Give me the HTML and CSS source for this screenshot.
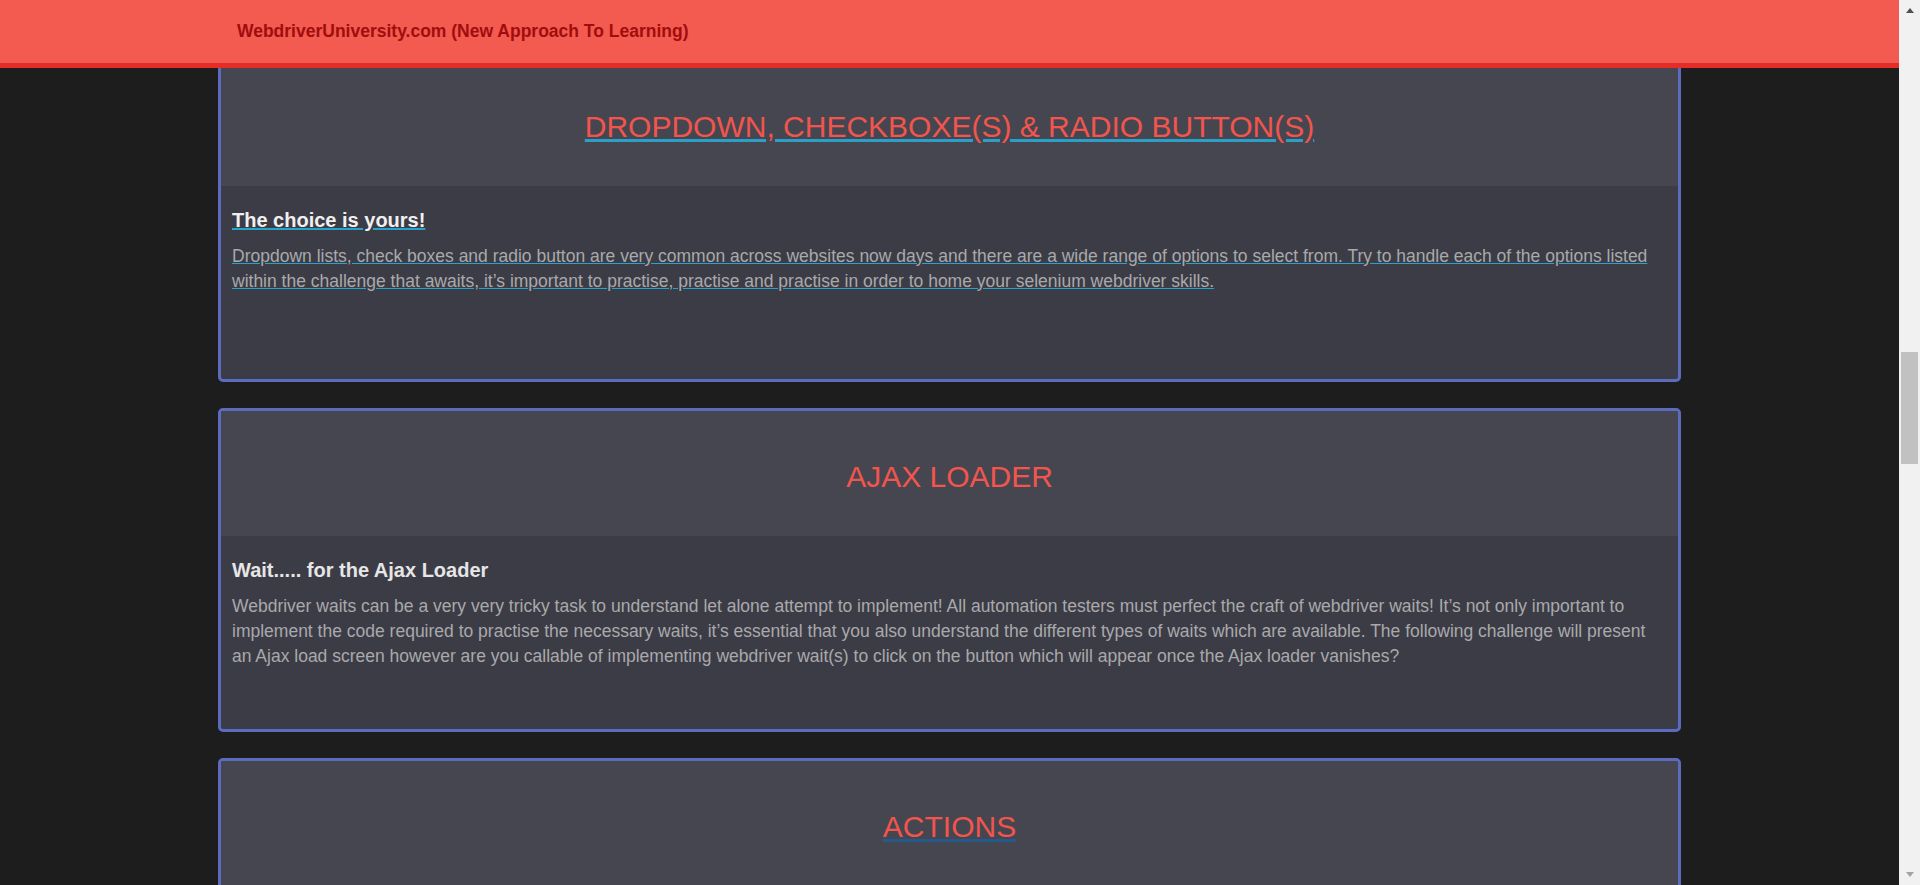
FILE: index.html
```html
<!DOCTYPE html>
<html lang="en">
<head>
<meta charset="utf-8">
<title>WebdriverUniversity.com</title>
<link rel="stylesheet" href="styles.css">
</head>
<body>
<div class="window">
  <div class="page">
    <header class="navbar">
      <span class="brand">WebdriverUniversity.com (New Approach To Learning)</span>
    </header>
    <div class="viewport">
      <div class="content">
        <section class="card">
          <div class="card-head">
            <h2 class="card-title hovered">DROPDOWN, CHECKBOXE(S) &amp; RADIO BUTTON(S)</h2>
          </div>
          <div class="card-body hovered-body">
            <h4 class="card-subtitle">The choice is yours!</h4>
            <p class="card-text">Dropdown lists, check boxes and radio button are very common across websites now days and there are a wide range of options to select from. Try to handle each of the options listed within the challenge that awaits, it’s important to practise, practise and practise in order to home your selenium webdriver skills.</p>
          </div>
        </section>
        <section class="card">
          <div class="card-head">
            <h2 class="card-title">AJAX LOADER</h2>
          </div>
          <div class="card-body">
            <h4 class="card-subtitle">Wait..... for the Ajax Loader</h4>
            <p class="card-text">Webdriver waits can be a very very tricky task to understand let alone attempt to implement! All automation testers must perfect the craft of webdriver waits! It’s not only important to implement the code required to practise the necessary waits, it’s essential that you also understand the different types of waits which are available. The following challenge will present an Ajax load screen however are you callable of implementing webdriver wait(s) to click on the button which will appear once the Ajax loader vanishes?</p>
          </div>
        </section>
        <section class="card">
          <div class="card-head">
            <h2 class="card-title visited">ACTIONS</h2>
          </div>
          <div class="card-body"></div>
        </section>
      </div>
    </div>
  </div>
  <div class="scrollbar">
    <div class="sb-btn"><span class="arrow-up"></span></div>
    <div class="sb-track"><div class="sb-thumb"></div></div>
    <div class="sb-btn"><span class="arrow-down"></span></div>
  </div>
</div>
</body>
</html>
```

FILE: styles.css
```css
html, body {
  margin: 0;
  padding: 0;
  height: 100%;
  overflow: hidden;
}

body {
  background: #1d1d1d;
  font-family: "Liberation Sans", Arial, sans-serif;
}

.window {
  display: flex;
  width: 1920px;
  height: 885px;
}

.page {
  flex: 1;
  display: flex;
  flex-direction: column;
  min-width: 0;
  background: #1d1d1d;
}

.navbar {
  flex: none;
  height: 63px;
  border-bottom: 5px solid #e32d26;
  background: #f35a50;
  display: flex;
  align-items: center;
  padding-left: 237px;
  position: relative;
  z-index: 2;
}

.brand {
  font-size: 17.5px;
  font-weight: bold;
  color: #a10d0d;
}

.viewport {
  flex: 1;
  overflow: hidden;
}

.content {
  margin-top: -10px;
  display: flex;
  flex-direction: column;
  align-items: center;
  gap: 26px;
}

.card {
  box-sizing: border-box;
  width: 1463px;
  height: 324px;
  flex: none;
  border: 3px solid #5c6bc0;
  border-radius: 5px;
  background: #3c3c46;
  overflow: hidden;
  display: flex;
  flex-direction: column;
}

.card-head {
  box-sizing: border-box;
  height: 125px;
  flex: none;
  background: #464650;
  padding-top: 49px;
  text-align: center;
}

.card-title {
  margin: 0;
  font-size: 30px;
  font-weight: normal;
  line-height: 34px;
  color: #f2554d;
  display: inline;
}

.card-title.hovered {
  text-decoration: underline;
  text-decoration-color: #2a9fc7;
  text-decoration-thickness: 3px;
  text-underline-offset: 2px;
}

.card-title.visited {
  text-decoration: underline;
  text-decoration-color: #235a8b;
  text-decoration-thickness: 3px;
  text-underline-offset: 2px;
}

.card-body {
  flex: 1;
  padding: 22px 11px 0;
}

.card-subtitle {
  margin: 0 0 11.5px;
  font-size: 20px;
  line-height: 24px;
  font-weight: bold;
  color: #e6e6e6;
}

.card-text {
  margin: 0;
  font-size: 17.5px;
  line-height: 25px;
  color: #a9a9ab;
}

.hovered-body .card-subtitle,
.hovered-body .card-text {
  text-decoration: underline;
  text-decoration-color: #27a3cc;
}

.hovered-body .card-subtitle {
  color: #f0f0f0;
}

/* scrollbar */
.scrollbar {
  flex: none;
  width: 21px;
  background: #f1f1f1;
  display: flex;
  flex-direction: column;
}

.sb-btn {
  flex: none;
  height: 21px;
  display: flex;
  align-items: center;
  justify-content: center;
}

.arrow-up {
  width: 0;
  height: 0;
  border-left: 4.5px solid transparent;
  border-right: 4.5px solid transparent;
  border-bottom: 5px solid #505050;
}

.arrow-down {
  width: 0;
  height: 0;
  border-left: 4.5px solid transparent;
  border-right: 4.5px solid transparent;
  border-top: 5px solid #a3a3a3;
}

.sb-track {
  flex: 1;
  display: flex;
  flex-direction: column;
  align-items: center;
}

.sb-thumb {
  margin-top: 331px;
  width: 17px;
  height: 112px;
  background: #c1c1c1;
}
```
